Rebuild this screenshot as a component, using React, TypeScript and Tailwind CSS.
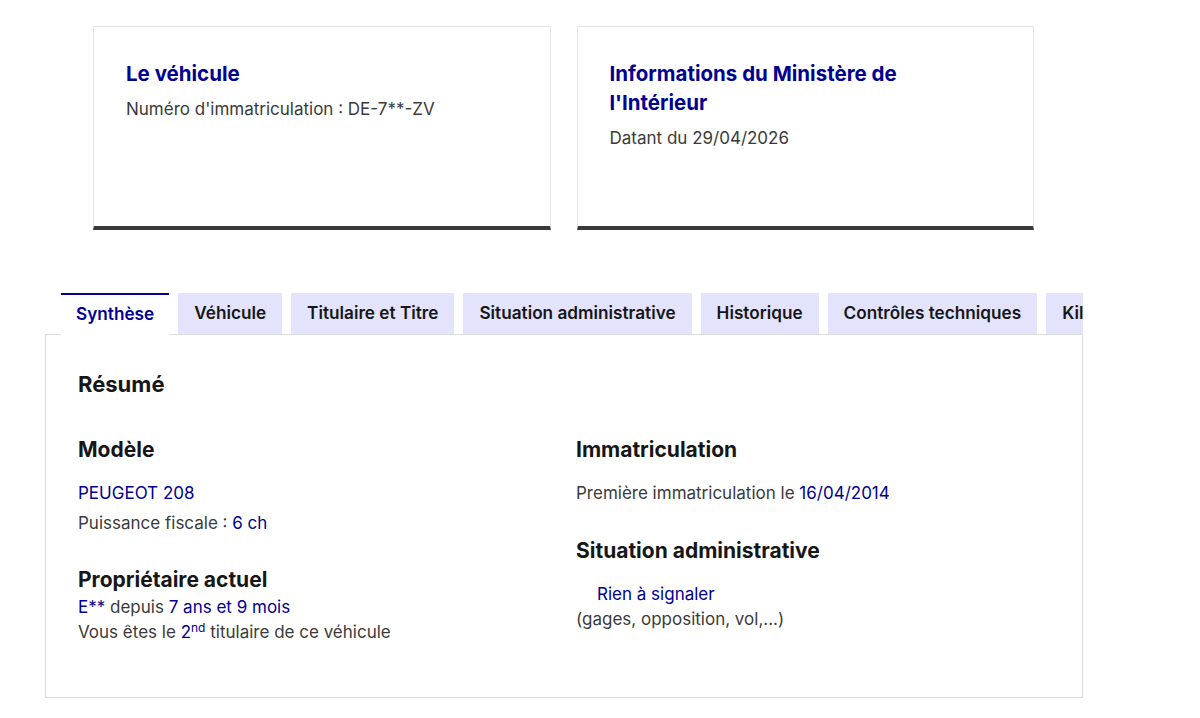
const tabs = ['Synthèse', 'Véhicule', 'Titulaire et Titre', 'Situation administrative', 'Historique', 'Contrôles techniques', 'Kilométrage'];

function InfoCard({ title, text }: { title: React.ReactNode; text: string }) {
  return (
    <div className="h-[204px] border border-[#e5e5e5] border-b-4 border-b-[#3a3a3a] bg-white pl-[32px] pr-8 pt-[32px]">
      <h2 className="text-[20.5px] leading-[29px] font-bold text-[#000091]">{title}</h2>
      <p className="mt-[9px] text-[17px] leading-[24px] text-[#3a3a3a]">{text}</p>
    </div>
  );
}

export default function App() {
  return (
    <div className="min-h-screen bg-white font-['Inter',sans-serif] text-[#3a3a3a]">
      <div className="ml-[45px] w-[1038px] pt-[26px]">
        {/* Top cards */}
        <div className="grid grid-cols-2 gap-[26px] pl-[48px] pr-[49px]">
          <InfoCard title="Le véhicule" text="Numéro d'immatriculation : DE-7**-ZV" />
          <InfoCard
            title={<>Informations du Ministère de<br />l'Intérieur</>}
            text="Datant du 29/04/2026"
          />
        </div>

        {/* Tabs */}
        <div className="mt-[63px] overflow-hidden">
          <div className="flex items-end gap-[9px] whitespace-nowrap pl-4">
            {tabs.map((t, i) =>
              i === 0 ? (
                <div
                  key={t}
                  className="relative z-10 -mb-px h-[42px] shrink-0 border-t-2 border-t-[#000091] bg-white px-[15px] pt-[7px] text-[17.2px] leading-[24px] font-semibold text-[#000091]"
                >
                  {t}
                </div>
              ) : (
                <div
                  key={t}
                  className="h-[41px] shrink-0 bg-[#e3e3fd] px-4 pt-[8px] text-[17.2px] leading-[24px] font-semibold text-[#161616]"
                >
                  {t}
                </div>
              )
            )}
          </div>

          {/* Panel */}
          <div className="h-[364px] border border-[#dddddd] px-[32px] pt-[35px]">
            <h3 className="text-[22px] leading-[28px] font-bold text-[#161616]">Résumé</h3>

            <div className="mt-[38px] grid grid-cols-2 gap-6">
              <div>
                <h4 className="text-[21px] leading-[28px] font-bold text-[#161616]">Modèle</h4>
                <p className="mt-[17px] text-[17px] leading-[24px] text-[#000091]">PEUGEOT 208</p>
                <p className="mt-[6px] text-[17px] leading-[24px]">
                  Puissance fiscale : <span className="text-[#000091]">6 ch</span>
                </p>
                <h4 className="mt-[31px] text-[21px] leading-[28px] font-bold text-[#161616]">Propriétaire actuel</h4>
                <p className="mt-px text-[17px] leading-[24px]">
                  <span className="text-[#000091]">E**</span> depuis <span className="text-[#000091]">7 ans et 9 mois</span>
                </p>
                <p className="mt-px text-[17px] leading-[24px]">
                  Vous êtes le <span className="text-[#000091]">2<sup className="text-[12px] leading-none">nd</sup></span> titulaire de ce véhicule
                </p>
              </div>

              <div>
                <h4 className="text-[21px] leading-[28px] font-bold text-[#161616]">Immatriculation</h4>
                <p className="mt-[17px] text-[17px] leading-[24px]">
                  Première immatriculation le <span className="text-[#000091]">16/04/2014</span>
                </p>
                <h4 className="mt-[32px] text-[21px] leading-[28px] font-bold text-[#161616]">Situation administrative</h4>
                <p className="mt-[17px] pl-[21px] text-[17px] leading-[24px] text-[#000091]">Rien à signaler</p>
                <p className="mt-px text-[17px] leading-[24px]">(gages, opposition, vol,...)</p>
              </div>
            </div>
          </div>
        </div>
      </div>
    </div>
  );
}
